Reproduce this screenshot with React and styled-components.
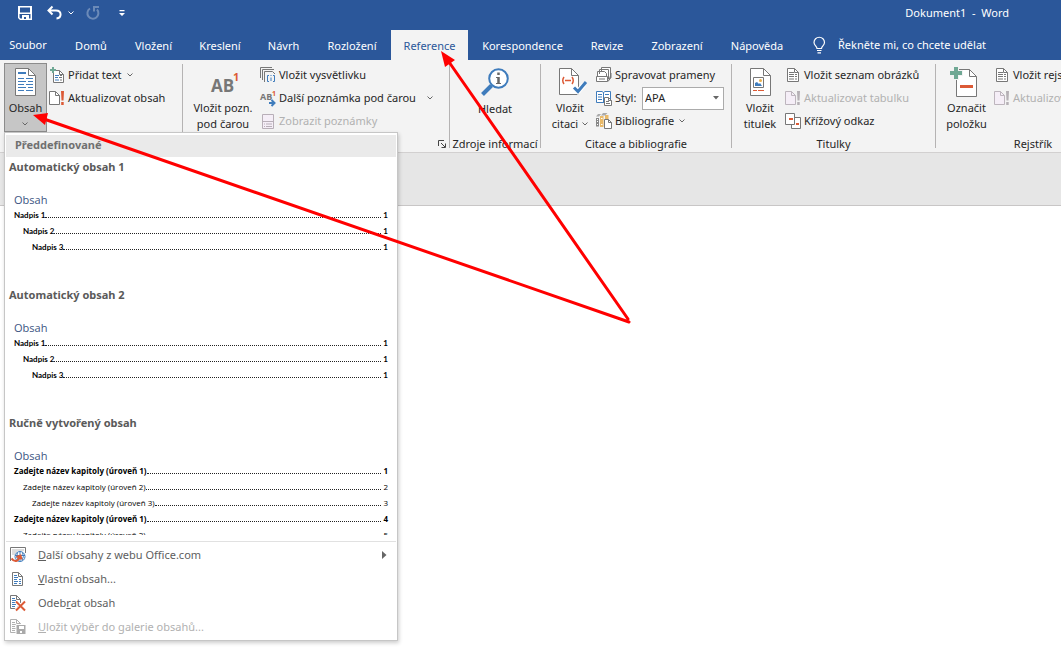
import React from "react";
import styled, { createGlobalStyle, css } from "styled-components";

const blue = "#2b579a";
const iconBlue = "#3f7cbc";
const gray = "#777";
const orange = "#dc5a36";
const green = "#6fa894";
const uiFont = `"Noto Sans", "Open Sans", sans-serif`;
const previewFont = `"Open Sans", "Noto Sans", sans-serif`;

const GlobalStyle = createGlobalStyle`
  * { box-sizing: border-box; }
  body {
    margin: 0;
    background: #fff;
    color: #262626;
    font: 11px/16px ${uiFont};
    overflow: hidden;
  }
  button, select { font: inherit; color: inherit; }
  button { border: 0; background: none; padding: 0; white-space: nowrap; }
  svg { display: block; flex: none; overflow: visible; }
`;

const Window = styled.div`
  position: relative;
  min-height: 100vh;
  overflow: hidden;
`;

const TitleBar = styled.header`
  display: flex;
  align-items: center;
  justify-content: space-between;
  height: 30px;
  padding: 0 52px 4px 18px;
  background: ${blue};
  color: #fff;
`;

const QuickAccess = styled.div`
  display: flex;
  align-items: center;
`;

const QuickButton = styled.button`
  width: ${(p) => p.$width}px;
  opacity: ${(p) => (p.disabled ? 0.3 : 1)};
  color: #fff;
`;

const DocTitle = styled.div`
  white-space: pre;
`;

const TabBar = styled.nav`
  display: flex;
  height: 30px;
  background: ${blue};
  color: #fff;
`;

const Tab = styled.button`
  flex: none;
  width: ${(p) => p.$width}px;
  padding: ${(p) => (p.$file ? "0 5px 0 0" : "2px 0 0")};
  ${(p) => p.$active && css`
    background: #f3f3f3;
    color: ${blue};
  `}
`;

const TellMe = styled.button`
  display: flex;
  align-items: center;
  gap: 12px;
  padding-left: 16px;
`;

const Ribbon = styled.div`
  display: flex;
  height: 93px;
  padding-top: 3px;
  overflow: hidden;
  background: #f3f3f3;
  border-bottom: 1px solid #d2d0d0;
`;

const Group = styled.section`
  flex: none;
  display: flex;
  flex-direction: column;
  width: ${(p) => p.$width}px;
`;

const GroupBody = styled.div`
  display: flex;
  gap: 2px;
  height: 73px;
  justify-content: ${(p) => (p.$center ? "center" : "flex-start")};
  padding-left: ${(p) => (p.$center ? 0 : p.$pad || 5)}px;
`;

const GroupLabel = styled.div`
  display: flex;
  align-items: center;
  justify-content: ${(p) => (p.$end ? "flex-end" : "center")};
  height: 16px;
  padding-right: ${(p) => (p.$end ? 3 : 0)}px;
  white-space: nowrap;
`;

const Divider = styled.div`
  flex: none;
  width: 1px;
  margin: 1px 0 4px;
  background: #b5b3b3;
`;

const LargeButton = styled.button`
  display: flex;
  flex-direction: column;
  align-items: center;
  flex: none;
  gap: 3px;
  width: ${(p) => p.$width}px;
  height: 69px;
  padding-top: 3px;
  ${(p) => p.$pressed && css`
    background: #c6c6c6;
    box-shadow: inset 0 0 0 1px #8c8c8c;
  `}
`;

const LargeIcon = styled.span`
  display: flex;
  align-items: center;
  justify-content: center;
  height: 32px;
`;

const LargeText = styled.span`
  display: flex;
  flex-direction: column;
  align-items: center;
`;

const LabelLine = styled.span`
  display: flex;
  align-items: center;
  justify-content: center;
  gap: 4px;
  height: 16px;
`;

const SmallColumn = styled.div`
  display: flex;
  flex-direction: column;
  align-items: flex-start;
  gap: 1px;
  padding-top: 1px;
`;

const rowStyle = css`
  display: flex;
  align-items: center;
  gap: 3px;
  height: 22px;
  white-space: nowrap;
`;

const SmallButton = styled.button`
  ${rowStyle}
  color: ${(p) => (p.disabled ? "#b1b1b1" : "#262626")};
`;

const StyleRow = styled.div`
  ${rowStyle}
`;

const IconSlot = styled.span`
  display: flex;
  justify-content: center;
  flex: none;
  width: 16px;
`;

const Caret = styled.span`
  padding-left: ${(p) => p.$space || 2}px;
`;

const StyleLabel = styled.label`
  width: 24px;
`;

const SelectBox = styled.span`
  position: relative;
  display: flex;
  svg { position: absolute; right: 5px; top: 9px; pointer-events: none; }
`;

const StyleSelect = styled.select`
  appearance: none;
  width: 82px;
  height: 23px;
  padding: 0 2px;
  border: 1px solid #ababab;
  border-radius: 0;
  background: #fff;
`;

const Launcher = styled.button`
  padding: 0;
`;

const Band = styled.div`
  height: 53px;
  background: #e6e6e6;
  border-bottom: 1px solid #c8c6c6;
`;

const Menu = styled.div`
  position: absolute;
  left: 4px;
  top: 132px;
  width: 394px;
  padding: 2px 1px 1px;
  background: #fff;
  border: 1px solid #c6c6c6;
  box-shadow: 1px 2px 4px rgba(0, 0, 0, 0.2);
  color: #5a5a5a;
`;

const MenuHeader = styled.h2`
  margin: 0;
  height: 22px;
  padding-left: 9px;
  background: #eaeaea;
  font: 700 11px/20px ${uiFont};
  color: #707070;
`;

const Gallery = styled.div`
  height: 378px;
  overflow: hidden;
`;

const GalleryItem = styled.div`
  height: 128px;
  padding: 1px 8px 0 3px;
`;

const GalleryTitle = styled.h3`
  margin: 0 0 17px;
  font: 700 11px/18px ${uiFont};
`;

const Preview = styled.div`
  padding-left: 5px;
`;

const PreviewHeading = styled.div`
  height: 14px;
  font: 11px/14px ${previewFont};
  color: #3b5482;
`;

const TocLine = styled.div`
  display: flex;
  align-items: center;
  height: 16px;
  padding-left: ${(p) => p.$level * 9}px;
  font: ${(p) => (p.$regular ? 500 : 700)} 8px/16px ${(p) => (p.$manual ? previewFont : "Lato, sans-serif")};
  color: #000;
`;

const Leader = styled.span`
  flex: 1;
  height: 5px;
  margin-right: 2px;
  border-bottom: 1px dotted #222;
`;

const MenuList = styled.div`
  display: flex;
  flex-direction: column;
  margin-top: 6px;
  padding-top: 1px;
  border-top: 1px solid #e1e1e1;
`;

const MenuItem = styled.button`
  display: flex;
  align-items: center;
  gap: 12px;
  height: 24px;
  padding: 0 9px 0 4px;
  text-align: left;
  color: ${(p) => (p.disabled ? "#b1b1b1" : "#5e5e5e")};
`;

const MenuText = styled.span`
  flex: 1;
`;

const Arrows = styled.svg`
  position: absolute;
  left: 0;
  top: 0;
  pointer-events: none;
`;

const Chevron = ({ light }) => (
  <svg width="6" height="4" fill="none" stroke={light ? "#fff" : "#666"}>
    <path d="M0.5 0.5 3 3 5.5 0.5" />
  </svg>
);

const Triangle = () => (
  <svg width="6" height="4" fill="#666"><path d="M0 0h6L3 3.5z" /></svg>
);

const Doc = ({ w, h, cut = 5, x = 0, y = 0, stroke = gray, fill = "#fff" }) => (
  <g transform={`translate(${x} ${y})`} fill={fill} stroke={stroke}>
    <path d={`M.5 .5H${w - cut - 0.5}L${w - 0.5} ${cut + 0.5}V${h - 0.5}H.5z`} />
    <path d={`M${w - cut - 0.5} .5V${cut + 0.5}H${w - 0.5}`} fill="none" />
  </g>
);

const SaveIcon = () => (
  <svg width="14" height="14" fill="#fff">
    <path fillRule="evenodd" d="M0 0h14v14H2L0 12zM2 1.5v5h10v-5zM1.5 8v3.5l1 1H4V9h7v3.500h1.500V8z" />
    <path d="M4 9h7v4H4z" />
    <path d="M6 11h2v2H6z" fill={blue} />
  </svg>
);

const UndoIcon = () => (
  <svg width="15" height="14" fill="none" stroke="#fff" strokeWidth="2">
    <path d="M5.500 0.500 1.500 4.500 5.500 8.500M2 4.500H9C15 4.500 15 12 9.500 12.500" />
  </svg>
);

const RedoIcon = () => (
  <svg width="14" height="14" fill="none" stroke="#fff" strokeWidth="2">
    <path d="M4 2.500A5.500 5.500 0 1 0 11 3.500M8 5.500V1H13" />
  </svg>
);

const CustomizeIcon = () => (
  <svg width="6" height="7" fill="#fff"><path d="M0.500 0h5v1.200h-5zM0 3h6L3 6z" /></svg>
);

const BulbIcon = () => (
  <svg width="13" height="17" fill="none" stroke="#fff" strokeWidth="1.200">
    <path d="M4 11.500C4 9 1 8.500 1 5.500A5 5 0 0 1 11.500 5.500C11.500 8.500 8.500 9 8.500 11.500zM4 13.500H8.500M4.500 15.800H8" />
  </svg>
);

const ContentsIcon = () => (
  <svg width="22" height="28">
    <Doc w={21} h={28} cut={7} />
    <path stroke={iconBlue} strokeWidth="2" d="M3 5h8" />
    <path stroke={iconBlue} d="M3 10.500h6M3 13.500h8M3 16.500h6M3 19.500h8M3 22.500h6M11 10.500h7M13 13.500h5M11 16.500h7M13 19.500h5M11 22.500h7" />
  </svg>
);

const AddTextIcon = () => (
  <svg width="15" height="16">
    <Doc w={11} h={13} x={3} y={3} cut={4} />
    <path stroke={green} strokeWidth="2" d="M3 0v6M0 3h6" />
    <path stroke={iconBlue} d="M5 8.500h4M5 10.500h3M5 13h4" />
    <path stroke={gray} d="M10 8.500h2M9 10.500h3M10 13h2" />
  </svg>
);

const UpdateIcon = ({ off }) => (
  <svg width="16" height="15">
    <Doc w={11} h={14} cut={4} stroke={off ? "#bdb5bd" : gray} fill={off ? "#f5eef7" : "#fff"} />
    <path fill={off ? "#b5b0b5" : orange} d="M12 0h3l-.5 9.500h-2zM12.200 11h2.500v3h-2.500z" />
  </svg>
);

const FootnoteIcon = () => (
  <svg width="24" height="24" fontFamily="Open Sans" fontWeight="700">
    <text x="0" y="22" fontSize="17" fill={gray}>AB</text>
    <text x="22" y="11" fontSize="11" fill={orange}>1</text>
  </svg>
);

const EndnoteIcon = () => (
  <svg width="16" height="16" fill="none" stroke={gray}>
    <path d="M.5 11V.5H12M2.500 13V2.500H14M4.500 15V4.500H12.500L15 7" />
    <path stroke={iconBlue} d="M9 8.500H7.500v6H9M13 8.500h1.500v6H13" />
    <path stroke={iconBlue} d="M11 10.500v3.500M11 8v1" />
  </svg>
);

const NextNoteIcon = () => (
  <svg width="16" height="16" fontFamily="Open Sans" fontWeight="700">
    <text x="0" y="10" fontSize="9" fill={gray}>AB</text>
    <text x="12" y="6" fontSize="7" fill={orange}>1</text>
    <path fill="none" stroke={iconBlue} strokeWidth="2" d="M9 13h5M11.500 10l3 3-3 3" />
  </svg>
);

const ShowNotesIcon = () => (
  <svg width="12" height="15" fill="#f5eef7" stroke="#b8afb8">
    <path d="M.5 .5h11v14H.5zM.5 7.500h11M2 10h1M4 10h6M2 12.500h1M4 12.500h6" />
  </svg>
);

const SearchIcon = () => (
  <svg width="28" height="28" fill="none" stroke={iconBlue}>
    <circle cx="17.500" cy="10.500" r="9.300" strokeWidth="2" fill="#fff" />
    <path strokeWidth="4" d="M10.500 17.500 1.500 26.500" />
    <path stroke="#666" strokeWidth="2.500" d="M17.500 9v7M17.500 4.500v2.500" />
    <path stroke="#666" d="M15 9.500h2.500M15 15.500h5" />
  </svg>
);

const CitationIcon = () => (
  <svg width="22" height="28" fill="none">
    <Doc w={20} h={27} cut={7} />
    <path stroke={orange} strokeWidth="1.500" d="M5 9Q2.500 12.500 5 16M13 9Q15.500 12.500 13 16M6 12.500h6" />
    <path stroke="#fff" strokeWidth="5" d="M15 19.500 19 23.500 25 16.500" />
    <path stroke={iconBlue} strokeWidth="3" d="M15 19.500 19 23.500 27 14" />
  </svg>
);

const SourcesIcon = () => (
  <svg width="16" height="16" fill="#fff" stroke={gray}>
    <path d="M5.500 5V.5h9V11M3.500 7V2.500h9V12M1.500 9.500V4.500H8.500L10.500 6.500V9.500" />
    <path d="M.5 9.500h11v5H.5zM3 12h6" />
    <path fill={gray} d="M12 14.500l3-4V6" />
  </svg>
);

const BookIcon = () => (
  <svg width="16" height="16" fill="#fff" stroke={iconBlue}>
    <path d="M.5 1.500H6L7.500 2.500 9 1.500H14.500V12.500H.5zM7.500 2.500V13M2 4.500h4M2 7h4M2 9.500h4M9 4.500h4" />
    <Doc w={8} h={9} x={8} y={7} cut={3} />
    <path stroke={gray} d="M10 11.500h3M10 13.500h4" />
  </svg>
);

const BibliographyIcon = () => (
  <svg width="16" height="16" fill="#e9b968">
    <path d="M4 3h3.500v11H4zM9 2h3.500v5H9z" />
    <path d="M0 3.500 2 1h3L3 3.500zM5 2.500 7 0h4.500L9 2.500z" fill="#aaa" />
    <path d="M0 5h3v8.500H0z" fill="#888" />
    <path d="M1 6.500h1M1 8.500h1M1 11.500h1M5 5.500h1.500M5 11.500h1.500" stroke="#fff" />
    <Doc w={8} h={10} x={8} y={6} cut={3} />
  </svg>
);

const CaptionIcon = () => (
  <svg width="21" height="28" fill="none">
    <Doc w={21} h={28} cut={7} />
    <path fill="#fff" stroke={gray} d="M3.500 9.500h10v10h-10z" />
    <circle cx="10.500" cy="12.500" r="1.500" fill="#eab04c" />
    <path fill={iconBlue} d="M5 18v-3l2-1 2 2 1-1 2 3z" />
    <path stroke={orange} d="M3 22.500h4M8 22.500h6" />
  </svg>
);

const ListIcon = () => (
  <svg width="12" height="14" stroke={gray}>
    <Doc w={12} h={14} cut={4} />
    <path strokeDasharray="5 1 2 1" d="M2 4.500h5M2 6.500h8M2 8.500h8M2 11h8" />
  </svg>
);

const CrossRefIcon = () => (
  <svg width="16" height="16" fill="#fff" stroke={gray}>
    <path d="M6.500 4.500h9v11h-9z" /><path d="M.5 .5h9v11H.5z" />
    <path stroke={orange} strokeWidth="2" d="M4 6h4M11 11h3" />
  </svg>
);

const MarkEntryIcon = () => (
  <svg width="33" height="30">
    <Doc w={21} h={28} x={6} y={2} cut={7} />
    <path stroke="#f3f3f3" strokeWidth="6" d="M6 0v13M0 6h13" />
    <path stroke={green} strokeWidth="4" d="M6 0v12M0 6h12" />
    <path stroke={orange} strokeWidth="3" d="M10 19.500h13" />
  </svg>
);

const LauncherIcon = () => (
  <svg width="8" height="8" fill="none" stroke="#444">
    <path d="M.5 6V.5H6M3 3l4 4M7.500 3.500v4h-4" />
  </svg>
);

const WebIcon = () => (
  <svg width="16" height="16" fill="none" stroke={gray}>
    <path d="M.5 14V.5h15V6" fill="#fff" />
    <path d="M2 3h12M2 5h5M2 7h3" stroke="#bbb" />
    <circle cx="10" cy="9.500" r="5" fill="#fff" stroke={iconBlue} />
    <path stroke={iconBlue} d="M5 8.500h10M10 4.500v10M7.500 5.500q-2 4 .5 8M12.500 5.500q2 4-.5 8" />
    <path stroke={orange} strokeWidth="2" d="M1.500 11.500q5 6 8.500-2M6.500 10l4-1.500 1 4" />
  </svg>
);

const CustomTocIcon = ({ color = iconBlue, line = gray }) => (
  <>
    <Doc w={11} h={14} cut={4} stroke={line} />
    <path stroke={color} d="M2 3.500h3M2 5.500h4M2 7.500h3M2 9.500h4M2 11.500h3M7 7.500h2M7 9.500h2M7 11.500h2" />
  </>
);

const CustomIcon = () => <svg width="12" height="14"><CustomTocIcon /></svg>;

const RemoveIcon = () => (
  <svg width="16" height="16">
    <CustomTocIcon />
    <path stroke="#fff" strokeWidth="4" d="M6 6.500l9 9M15 6.500l-9 9" />
    <path stroke={orange} strokeWidth="2" d="M6 6.500l9 9M15 6.500l-9 9" />
  </svg>
);

const SaveSelectionIcon = () => (
  <svg width="16" height="16">
    <CustomTocIcon color="#b1b1b1" line="#b1b1b1" />
    <path fill="#aaa" stroke="#fff" d="M6 5.500h10v10H6z" />
    <path fill="#fff" d="M9 7h5v3H9zM10 12h2v2h-2z" />
  </svg>
);

const tabs = [
  ["Soubor", 61], ["Domů", 60], ["Vložení", 65], ["Kreslení", 68], ["Návrh", 59],
  ["Rozložení", 78], ["Reference", 77], ["Korespondence", 109], ["Revize", 60],
  ["Zobrazení", 80], ["Nápověda", 80],
];

const headings = [["Nadpis 1", 0, 1], ["Nadpis 2", 1, 1], ["Nadpis 3", 2, 1]];
const chapters = [1, 2, 3, 1, 2].map((n, i) => [`Zadejte název kapitoly (úroveň ${n})`, n - 1, i + 1]);
const gallery = [
  { title: "Automatický obsah 1", lines: headings },
  { title: "Automatický obsah 2", lines: headings },
  { title: "Ručně vytvořený obsah", lines: chapters, manual: true },
];

const Small = ({ icon, text, caret, space, disabled }) => (
  <SmallButton disabled={disabled}>
    <IconSlot>{icon}</IconSlot>
    {text}
    {caret && <Caret $space={space}><Chevron /></Caret>}
  </SmallButton>
);

const Large = ({ icon, lines, caret, width, pressed }) => (
  <LargeButton $width={width} $pressed={pressed}>
    <LargeIcon>{icon}</LargeIcon>
    <LargeText>
      {lines.map((line, i) => (
        <LabelLine key={i}>
          {line}
          {caret && i === lines.length - 1 && <Chevron />}
        </LabelLine>
      ))}
    </LargeText>
  </LargeButton>
);

const Entry = ({ icon, text, disabled, submenu }) => (
  <MenuItem role="menuitem" disabled={disabled}>
    <IconSlot>{icon}</IconSlot>
    <MenuText>{text}</MenuText>
    {submenu && <svg width="5" height="8" fill="#666"><path d="M0 0 4.500 4 0 8z" /></svg>}
  </MenuItem>
);

export default function App() {
  return (
    <Window>
      <GlobalStyle />
      <TitleBar>
        <QuickAccess>
          <QuickButton $width={29} aria-label="Uložit"><SaveIcon /></QuickButton>
          <QuickButton $width={21} aria-label="Zpět"><UndoIcon /></QuickButton>
          <QuickButton $width={18} aria-label="Historie"><Chevron light /></QuickButton>
          <QuickButton $width={33} disabled aria-label="Opakovat"><RedoIcon /></QuickButton>
          <QuickButton $width={8} aria-label="Přizpůsobit"><CustomizeIcon /></QuickButton>
        </QuickAccess>
        <DocTitle>Dokument1  -  Word</DocTitle>
      </TitleBar>
      <TabBar>
        {tabs.map(([name, width], i) => (
          <Tab key={name} $width={width} $file={i === 0} $active={name === "Reference"}>{name}</Tab>
        ))}
        <TellMe><BulbIcon />Řekněte mi, co chcete udělat</TellMe>
      </TabBar>
      <Ribbon>
        <Group $width={182}>
          <GroupBody $pad={4}>
            <Large pressed width={43} icon={<ContentsIcon />} lines={["Obsah", ""]} caret />
            <SmallColumn>
              <Small icon={<AddTextIcon />} text="Přidat text" caret />
              <Small icon={<UpdateIcon />} text="Aktualizovat obsah" />
            </SmallColumn>
          </GroupBody>
        </Group>
        <Divider />
        <Group $width={266}>
          <GroupBody>
            <Large width={70} icon={<FootnoteIcon />} lines={["Vložit pozn.", "pod čarou"]} />
            <SmallColumn>
              <Small icon={<EndnoteIcon />} text="Vložit vysvětlivku" />
              <Small icon={<NextNoteIcon />} text="Další poznámka pod čarou" caret space={8} />
              <Small icon={<ShowNotesIcon />} text="Zobrazit poznámky" disabled />
            </SmallColumn>
          </GroupBody>
          <GroupLabel $end><Launcher aria-label="Možnosti poznámek"><LauncherIcon /></Launcher></GroupLabel>
        </Group>
        <Divider />
        <Group $width={90}>
          <GroupBody $center><Large width={60} icon={<SearchIcon />} lines={["Hledat"]} /></GroupBody>
          <GroupLabel>Zdroje informací</GroupLabel>
        </Group>
        <Divider />
        <Group $width={190}>
          <GroupBody>
            <Large width={48} icon={<CitationIcon />} lines={["Vložit", "citaci"]} caret />
            <SmallColumn>
              <Small icon={<SourcesIcon />} text="Spravovat prameny" />
              <StyleRow>
                <IconSlot><BookIcon /></IconSlot>
                <StyleLabel htmlFor="citation-style">Styl:</StyleLabel>
                <SelectBox>
                  <StyleSelect id="citation-style"><option>APA</option></StyleSelect>
                  <Triangle />
                </SelectBox>
              </StyleRow>
              <Small icon={<BibliographyIcon />} text="Bibliografie" caret />
            </SmallColumn>
          </GroupBody>
          <GroupLabel>Citace a bibliografie</GroupLabel>
        </Group>
        <Divider />
        <Group $width={203}>
          <GroupBody>
            <Large width={46} icon={<CaptionIcon />} lines={["Vložit", "titulek"]} />
            <SmallColumn>
              <Small icon={<ListIcon />} text="Vložit seznam obrázků" />
              <Small icon={<UpdateIcon off />} text="Aktualizovat tabulku" disabled />
              <Small icon={<CrossRefIcon />} text="Křížový odkaz" />
            </SmallColumn>
          </GroupBody>
          <GroupLabel>Titulky</GroupLabel>
        </Group>
        <Divider />
        <Group $width={194}>
          <GroupBody>
            <Large width={51} icon={<MarkEntryIcon />} lines={["Označit", "položku"]} />
            <SmallColumn>
              <Small icon={<ListIcon />} text="Vložit rejstřík" />
              <Small icon={<UpdateIcon off />} text="Aktualizovat rejstřík" disabled />
            </SmallColumn>
          </GroupBody>
          <GroupLabel>Rejstřík</GroupLabel>
        </Group>
      </Ribbon>
      <Band />
      <Menu role="menu">
        <MenuHeader>Předdefinované</MenuHeader>
        <Gallery>
          {gallery.map((item) => (
            <GalleryItem key={item.title}>
              <GalleryTitle>{item.title}</GalleryTitle>
              <Preview>
                <PreviewHeading>Obsah</PreviewHeading>
                {item.lines.map(([text, level, page]) => (
                  <TocLine
                    key={page + text}
                    $level={level}
                    $manual={item.manual}
                    $regular={item.manual && level > 0}
                  >
                    {text}<Leader />{page}
                  </TocLine>
                ))}
              </Preview>
            </GalleryItem>
          ))}
        </Gallery>
        <MenuList>
          <Entry icon={<WebIcon />} text={<><u>D</u>alší obsahy z webu Office.com</>} submenu />
          <Entry icon={<CustomIcon />} text={<><u>V</u>lastní obsah...</>} />
          <Entry icon={<RemoveIcon />} text={<>Odeb<u>r</u>at obsah</>} />
          <Entry icon={<SaveSelectionIcon />} text={<><u>U</u>ložit výběr do galerie obsahů...</>} disabled />
        </MenuList>
      </Menu>
      <Arrows width="640" height="340" fill="none" stroke="#f00" strokeWidth="3" strokeLinecap="round">
        <path d="M44 119 629 322M449 62 628 319" />
        <path fill="#f00" stroke="none" d="M33 115 48 113 45 125zM441 51 455 60 445 67z" />
      </Arrows>
    </Window>
  );
}
